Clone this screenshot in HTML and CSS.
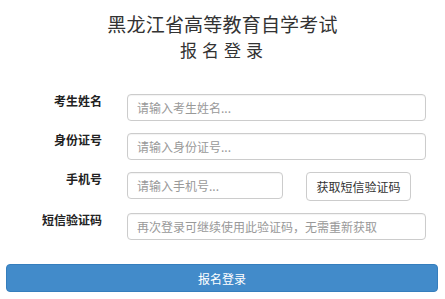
FILE: index.html
```html
<!DOCTYPE html>
<html lang="zh-CN">
<head>
    <meta charset="UTF-8">
    <title>报名登录</title>
    <link rel="stylesheet" href="styles.css">
</head>
<body>
    <div class="header">
        <h1>黑龙江省高等教育自学考试</h1>
        <h2>报名登录</h2>
    </div>

    <form class="login-form">
        <label class="form-label" for="name">考生姓名</label>
        <input class="form-input" type="text" id="name" placeholder="请输入考生姓名...">

        <label class="form-label" for="idcard">身份证号</label>
        <input class="form-input" type="text" id="idcard" placeholder="请输入身份证号...">

        <label class="form-label" for="phone">手机号</label>
        <div class="phone-group">
            <input class="form-input phone-input" type="text" id="phone" placeholder="请输入手机号...">
            <button class="code-button" type="button">获取短信验证码</button>
        </div>

        <label class="form-label" for="code">短信验证码</label>
        <input class="form-input" type="text" id="code" placeholder="再次登录可继续使用此验证码，无需重新获取">
    </form>

    <button class="submit-button" type="button">报名登录</button>
</body>
</html>
```

FILE: styles.css
```css
/* Style général */
body {
    margin: 0;
    font-family: "Noto Sans CJK SC", "Liberation Sans", sans-serif;
    color: #333;
    background: #fff;
}

.header {
    padding-top: 10px;
    text-align: center;
}

.header h1 {
    margin: 0;
    font-size: 19px;
    font-weight: normal;
    line-height: 27px;
    letter-spacing: 0.2px;
}

.header h2 {
    margin: 1px 0 0 0;
    font-size: 17px;
    font-weight: normal;
    line-height: 24px;
    letter-spacing: 5px;
    padding-left: 3px;
}

.login-form {
    display: grid;
    grid-template-columns: 102px 299px;
    column-gap: 25px;
    row-gap: 12px;
    margin-top: 32px;
}

.form-label {
    text-align: right;
    font-size: 12px;
    font-weight: bold;
    line-height: 14px;
    color: #222;
}

.form-input {
    box-sizing: border-box;
    height: 27px;
    width: 100%;
    margin: 0;
    padding: 0 9px;
    border: 1px solid #ccc;
    border-radius: 4px;
    font-family: inherit;
    font-size: 12px;
    color: #555;
    box-shadow: inset 0 1px 1px rgba(0, 0, 0, 0.05);
}

.form-input::placeholder {
    color: #999;
}

.phone-group {
    display: flex;
    align-items: flex-start;
    gap: 23px;
}

.phone-input {
    width: 156px;
}

.code-button {
    box-sizing: border-box;
    width: 105px;
    height: 29px;
    margin: 0;
    padding: 0;
    border: 1px solid #ccc;
    border-radius: 4px;
    background: #fff;
    font-family: inherit;
    font-size: 12px;
    color: #333;
    cursor: pointer;
}

.submit-button {
    display: block;
    box-sizing: border-box;
    width: 432px;
    height: 28px;
    margin: 24px 0 0 6px;
    padding: 0;
    border: 1px solid #357ebd;
    border-radius: 4px;
    background: #428bca;
    font-family: inherit;
    font-size: 12px;
    color: #fff;
    cursor: pointer;
}
```
